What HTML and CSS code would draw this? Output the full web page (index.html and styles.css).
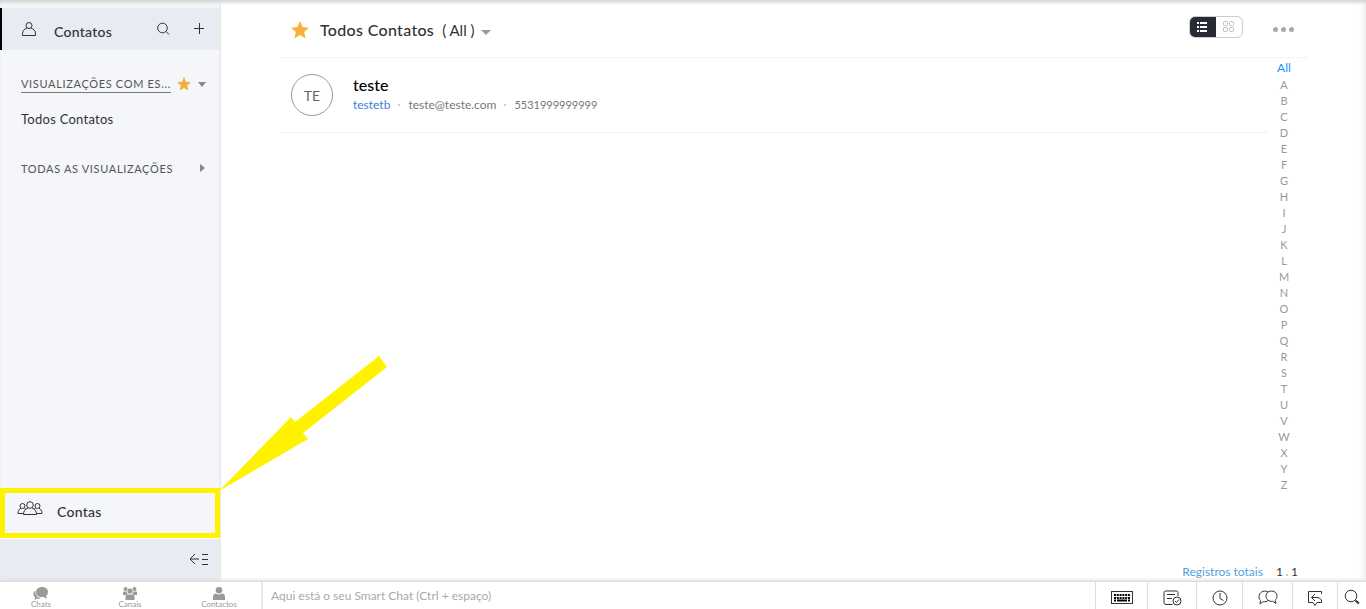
FILE: index.html
```
<!DOCTYPE html>
<html lang="pt-BR">
<head>
    <meta charset="UTF-8">
    <meta name="viewport" content="width=device-width, initial-scale=1.0">
    <title>Contatos</title>
    <link rel="stylesheet" href="styles.css">
</head>
<body>
    <div class="workspace">
        <aside class="sidebar">
            <div class="module active">
                <svg class="module-icon" width="16" height="16" viewBox="0 0 16 16"><circle cx="8" cy="4.500" r="3"/><path d="M6 7C3.500 8 1.500 9.500 1.500 13v1.500h13V13c0-3.500-2-5-4.500-6"/></svg>
                <span class="module-name">Contatos</span>
                <button class="icon-button" aria-label="Pesquisar"><svg width="14" height="14" viewBox="0 0 14 14"><circle cx="6.500" cy="6" r="4.800"/><path d="M10 9.500l3 3"/></svg></button>
                <button class="icon-button add" aria-label="Adicionar"><svg width="12" height="12" viewBox="0 0 12 12"><path d="M1 5.500h10M6.500 0v11"/></svg></button>
            </div>

            <nav class="views">
                <div class="view-group">
                    <a href="#" class="view-title underlined">VISUALIZAÇÕES COM ES...</a>
                    <svg class="star" width="14" height="14" viewBox="0 0 16 16"><path d="M8 0l2.300 5.300 5.700.6-4.300 3.800 1.300 5.800L8 12.500l-5 3 1.300-5.800L0 5.900l5.700-.6z"/></svg>
                    <span class="caret-down"></span>
                </div>
                <a href="#" class="view-link">Todos Contatos</a>
                <div class="view-group">
                    <a href="#" class="view-title">TODAS AS VISUALIZAÇÕES</a>
                    <span class="caret-right"></span>
                </div>
            </nav>

            <div class="module highlighted">
                <svg class="module-icon" width="26" height="16" viewBox="0 0 26 16"><circle cx="13" cy="4" r="3.300"/><path d="M11 7c-2.800 1-4.500 2.800-4.500 6.500h13c0-3.700-1.700-5.500-4.500-6.500"/><circle cx="5.500" cy="5" r="2.500"/><path d="M4 7.200C2 8 1 9.800 1 12.500h5M7.500 7.300l1.500 1"/><circle cx="20.500" cy="5" r="2.500"/><path d="M22 7.200c2 .8 3 2.600 3 5.300h-5M18.500 7.300l-1.500 1"/></svg>
                <span class="module-name">Contas</span>
                <svg class="arrow" width="168" height="136" viewBox="0 0 168 136"><path d="M0 135L72 61l4 5L160 0l8 11-84 66 5 6z"/></svg>
            </div>

            <div class="sidebar-footer">
                <button class="icon-button" aria-label="Recolher menu"><svg width="20" height="13" viewBox="0 0 20 13"><path d="M6 1L1 6l5 5M1 6h9M13 1.500h6M13 6.500h6M13 11.500h6"/></svg></button>
            </div>
        </aside>

        <main class="content">
            <header class="content-header">
                <svg class="star" width="18" height="18" viewBox="0 0 16 16"><path d="M8 0l2.300 5.300 5.700.6-4.300 3.800 1.300 5.800L8 12.500l-5 3 1.300-5.800L0 5.900l5.700-.6z"/></svg>
                <h1>Todos Contatos</h1>
                <span class="filter">( All )</span>
                <span class="caret-down"></span>
                <div class="view-switch">
                    <button class="selected" aria-label="Lista"><svg width="10" height="10" viewBox="0 0 10 10"><path d="M0 0h2v2H0zM3 0h7v2H3zM0 4h2v2H0zM3 4h7v2H3zM0 8h2v2H0zM3 8h7v2H3z"/></svg></button>
                    <button aria-label="Grade"><svg width="11" height="11" viewBox="0 0 11 11"><rect x=".5" y=".5" width="4" height="4" rx="1"/><rect x="6.500" y=".5" width="4" height="4" rx="1"/><rect x=".5" y="6.500" width="4" height="4" rx="1"/><rect x="6.500" y="6.500" width="4" height="4" rx="1"/></svg></button>
                </div>
                <button class="more" aria-label="Mais"><i></i><i></i><i></i></button>
            </header>

            <div class="content-body">
                <section class="contacts">
                    <article class="contact">
                        <div class="avatar">TE</div>
                        <div>
                            <h2>teste</h2>
                            <div class="details">
                                <a href="#">testetb</a>
                                <i class="dot"></i>
                                <span>teste@teste.com</span>
                                <i class="dot"></i>
                                <span class="phone">5531999999999</span>
                            </div>
                        </div>
                    </article>
                </section>
                <nav class="alphabet">
                    <a href="#" class="current">All</a>
                    <a href="#">A</a>
                    <a href="#">B</a>
                    <a href="#">C</a>
                    <a href="#">D</a>
                    <a href="#">E</a>
                    <a href="#">F</a>
                    <a href="#">G</a>
                    <a href="#">H</a>
                    <a href="#">I</a>
                    <a href="#">J</a>
                    <a href="#">K</a>
                    <a href="#">L</a>
                    <a href="#">M</a>
                    <a href="#">N</a>
                    <a href="#">O</a>
                    <a href="#">P</a>
                    <a href="#">Q</a>
                    <a href="#">R</a>
                    <a href="#">S</a>
                    <a href="#">T</a>
                    <a href="#">U</a>
                    <a href="#">V</a>
                    <a href="#">W</a>
                    <a href="#">X</a>
                    <a href="#">Y</a>
                    <a href="#">Z</a>
                </nav>
            </div>

            <div class="records">
                <a href="#">Registros totais</a>
                <span class="range">1 <i class="dot"></i> 1</span>
            </div>
        </main>
    </div>

    <footer class="chat-bar">
        <div class="chat-tabs">
            <button>
                <svg width="16" height="13" viewBox="0 0 16 13"><path d="M9 0c3.700 0 6 2.200 6 5 0 1.800-.8 3-2 4l1 3-3.500-2C5.600 10.600 3 8.500 3 5.200 3 2.300 5.300 0 9 0zM2.200 3.500C2 8 4.500 10.500 8 11.200c-1.300.6-2.700.6-4 .3L1.500 13l.5-2.800C-.5 8 .3 5 2.200 3.500z"/></svg>
                Chats
            </button>
            <button>
                <svg width="14" height="13" viewBox="0 0 14 13"><circle cx="2.500" cy="2" r="2"/><circle cx="11.500" cy="2" r="2"/><circle cx="7" cy="4" r="2.600"/><path d="M0 8V5.500Q0 4.500 1 4.500h2.500l1 2.500L3 8zM14 8V5.500q0-1-1-1h-2.500l-1 2.500L11 8zM2.500 13v-3.500q0-2 2-2h5q2 0 2 2V13z"/></svg>
                Canais
            </button>
            <button>
                <svg width="12" height="13" viewBox="0 0 12 13"><circle cx="6" cy="3.300" r="3.300"/><path d="M0 13V9.500Q0 7 2.500 6.500q3.500 2 7 0Q12 7 12 9.500V13z"/></svg>
                Contactos
            </button>
        </div>
        <input class="chat-input" type="text" aria-label="Smart Chat" placeholder="Aqui está o seu Smart Chat (Ctrl + espaço)">
        <div class="tools">
            <button class="tool-keyboard" aria-label="Atalhos de teclado"><svg width="22" height="13" viewBox="0 0 22 13"><rect x=".5" y=".5" width="21" height="12"/><path d="M3 4h16M3 7h16" stroke="#000" stroke-width="2" stroke-dasharray="2 .8"/><path d="M3 9.500h2M6 9.500h10M17 9.500h2" stroke="#000" stroke-width="2"/></svg></button>
            <button class="tool-notes" aria-label="Notas"><svg width="19" height="16" viewBox="0 0 19 16"><path d="M9.500 14.500H3q-2 0-2-2V2.500q0-1.500 1.500-1.500h11Q15 1 15 2.500V6M4 4.500h8M4 8.500h5"/><circle cx="14" cy="11" r="4"/><path d="M12 11l1.500 1.500 2.500-3"/></svg></button>
            <button class="tool-clock" aria-label="Recentes"><svg width="16" height="16" viewBox="0 0 16 16"><circle cx="8" cy="8" r="7"/><path d="M8 3v5.500l3.500 2"/></svg></button>
            <button class="tool-chat" aria-label="Conversas"><svg width="20" height="16" viewBox="0 0 20 16"><path d="M13.500 1C17 1 19 3.300 19 6.200c0 1.800-.7 3.100-1.900 4l.9 3.300-3.300-2.200C11 11.800 8 9.500 8 6.200 8 3.300 10 1 13.500 1z"/><path d="M10 1.800C5.300-.2 1 2.500 1 6.700c0 1.600.6 2.900 1.500 3.800L2 14l3.200-2.300c2 .3 4-.2 5.300-1.400"/></svg></button>
            <button class="tool-reply" aria-label="Responder"><svg width="16" height="16" viewBox="0 0 16 16"><path d="M14.500 4V1.500h-13v11H6l2 3 2-3h4.500V10Q13 7.500 10 7.500H4.500M8 4L4.500 7.500 8 11"/></svg></button>
            <button class="tool-search" aria-label="Pesquisar"><svg width="16" height="18" viewBox="0 0 16 18"><circle cx="7" cy="7" r="5.800"/><path d="M11.500 11.500l3.500 3" stroke-width="2"/></svg></button>
        </div>
    </footer>
</body>
</html>
```

FILE: styles.css
```
:root {
    --sidebar: #f4f6fa;
    --sidebar-active: #e8ebf2;
    --text: #333;
    --muted: #777;
    --line: #e9e9e9;
    --star: #f7b03c;
    --highlight: #fff200;
}

* {
    box-sizing: border-box;
}

body {
    display: flex;
    flex-direction: column;
    min-height: 100vh;
    margin: 0;
    color: var(--text);
    font-family: Lato, "Liberation Sans", sans-serif;
    font-size: 13px;
}

a {
    color: inherit;
    text-decoration: none;
}

button {
    padding: 0;
    border: 0;
    background: none;
    color: inherit;
    font-family: inherit;
    cursor: pointer;
}

svg {
    display: block;
    flex: none;
    fill: none;
    stroke: #333;
}

.workspace {
    display: flex;
    flex: 1;
    box-shadow: inset 0 4px 4px -2px #ccc, inset -8px 0 8px -6px #eee;
}

/* sidebar */
.sidebar {
    display: flex;
    flex-direction: column;
    width: 221px;
    padding-top: 8px;
    border-right: 1px solid #e4e7ec;
    background: var(--sidebar);
    box-shadow: inset 0 4px 4px -2px #ccc;
}

.module {
    display: flex;
    align-items: center;
    height: 42px;
}

.module.active {
    padding: 0 15px 0 19px;
    border-left: 2px solid #000;
    background: var(--sidebar-active);
}

.module-name {
    padding-top: 4px;
    font-size: 14px;
    font-weight: 500;
    letter-spacing: 0.02em;
}

.active .module-name {
    margin: 0 auto 0 17px;
}

.icon-button.add {
    margin-left: 23px;
}

.views {
    padding: 24px 14px 0 21px;
}

.view-group {
    display: flex;
    align-items: center;
    height: 20px;
}

.view-title {
    color: #555;
    font-size: 11px;
    line-height: 17px;
    letter-spacing: 0.06em;
    white-space: nowrap;
}

.view-title.underlined {
    min-width: 150px;
    border-bottom: 1px solid #777;
}

.view-group .star {
    margin-left: 6px;
}

.view-group .caret-down,
.view-group .caret-right {
    margin-left: auto;
}

.view-link {
    display: block;
    margin: 16px 0 30px;
    font-size: 13px;
    line-height: 18px;
    letter-spacing: 0.02em;
}

.star {
    fill: var(--star);
    stroke: none;
}

.caret-down {
    border: 4px solid transparent;
    border-top: 5px solid #888;
    border-bottom: 0;
}

.caret-right {
    margin-right: 1px;
    border: 4px solid transparent;
    border-left: 5px solid #888;
    border-right: 0;
}

.module.highlighted {
    position: relative;
    gap: 14px;
    height: 50px;
    margin-top: auto;
    padding: 0 12px;
    border: 5px solid var(--highlight);
}

.highlighted .module-icon {
    margin-bottom: 9px;
}

.highlighted .module-name {
    padding: 0 0 4px;
}

.arrow {
    position: absolute;
    bottom: 41px;
    left: 214px;
    fill: var(--highlight);
    stroke: none;
}

.sidebar-footer {
    display: flex;
    align-items: center;
    justify-content: flex-end;
    height: 43px;
    padding: 0 11px 2px 0;
    border-top: 1px solid #fff;
    background: var(--sidebar-active);
}

/* contacts */
.content {
    display: flex;
    flex: 1;
    flex-direction: column;
    padding: 0 59px 0 60px;
}

.content-header {
    display: flex;
    align-items: center;
    height: 58px;
    padding: 2px 13px 0 10px;
    border-bottom: 1px dotted var(--line);
}

h1 {
    margin: 0 8px 0 11px;
    font-size: 16px;
    font-weight: 500;
    letter-spacing: 0.02em;
}

.filter {
    margin-right: 6px;
    font-size: 15px;
}

.content-header .caret-down {
    margin-top: 5px;
    border-width: 5px 5px 0;
    border-top-color: #999;
}

.view-switch {
    display: flex;
    width: 54px;
    height: 22px;
    margin: 0 30px 6px auto;
    border: 1px solid #ccc;
    border-radius: 6px;
    overflow: hidden;
}

.view-switch button {
    display: flex;
    flex: 1;
    align-items: center;
    justify-content: center;
}

.view-switch svg {
    stroke: #bbb;
}

.view-switch .selected {
    margin: -1px 0 -1px -1px;
    background: #272b35;
}

.view-switch .selected svg {
    fill: #fff;
    stroke: none;
}

.more {
    display: flex;
    gap: 3px;
}

.more i {
    width: 5px;
    height: 5px;
    border-radius: 50%;
    background: #aaa;
}

.content-body {
    display: flex;
    flex: 1;
}

.contacts {
    flex: 1;
}

.contact {
    display: flex;
    align-items: center;
    gap: 20px;
    height: 75px;
    padding-left: 10px;
    border-bottom: 1px dotted var(--line);
}

.avatar {
    width: 42px;
    height: 42px;
    border: 1px solid #999;
    border-radius: 50%;
    color: #666;
    font-size: 14px;
    line-height: 42px;
    text-align: center;
}

h2 {
    margin: 0;
    color: #000;
    font-size: 16px;
    font-weight: 500;
    line-height: 20px;
}

.details {
    display: flex;
    align-items: center;
    gap: 8px;
    color: var(--muted);
    font-size: 12px;
    line-height: 20px;
}

.details a {
    color: #3c7de0;
}

.phone {
    font-size: 11px;
}

.dot {
    display: inline-block;
    width: 2px;
    height: 2px;
    background: #ccc;
}

.alphabet {
    display: flex;
    flex-direction: column;
    width: 40px;
    padding: 2px 6px 0 0;
    color: #999;
    font-size: 11px;
    line-height: 16px;
    text-align: center;
}

.alphabet .current {
    margin-bottom: 1px;
    color: #1e90ff;
    font-size: 12px;
}

.records {
    display: flex;
    justify-content: flex-end;
    gap: 13px;
    padding-right: 9px;
    font-size: 12px;
    line-height: 18px;
}

.records a {
    color: #4aa3df;
}

/* bottom bar */
.chat-bar {
    display: flex;
    height: 28px;
    border-top: 1px solid #ddd;
    background: #fff;
    box-shadow: 0 -1px 3px #ddd;
}

.chat-tabs {
    display: flex;
    gap: 7px;
    width: 263px;
    border-right: 2px solid #e8e8e8;
}

.chat-tabs button {
    display: flex;
    flex-direction: column;
    align-items: center;
    width: 82px;
    padding-top: 5px;
    color: #999;
    font-size: 8px;
    line-height: 9px;
}

.chat-tabs svg {
    fill: #999;
    stroke: none;
}

.chat-input {
    flex: 1;
    min-width: 0;
    padding: 0 8px;
    border: 0;
    color: var(--text);
    font-family: inherit;
    font-size: 12px;
    outline: none;
}

.chat-input::placeholder {
    color: #aaa;
}

.tools {
    display: flex;
}

.tools button {
    display: flex;
    justify-content: center;
    align-items: center;
    padding-top: 4px;
    border-left: 1px solid #ddd;
}

.tool-keyboard {
    width: 52px;
}

.tool-notes {
    width: 49px;
}

.tool-clock {
    width: 46px;
}

.tool-chat {
    width: 50px;
}

.tool-reply {
    width: 45px;
}

.tool-search {
    width: 29px;
}
```
